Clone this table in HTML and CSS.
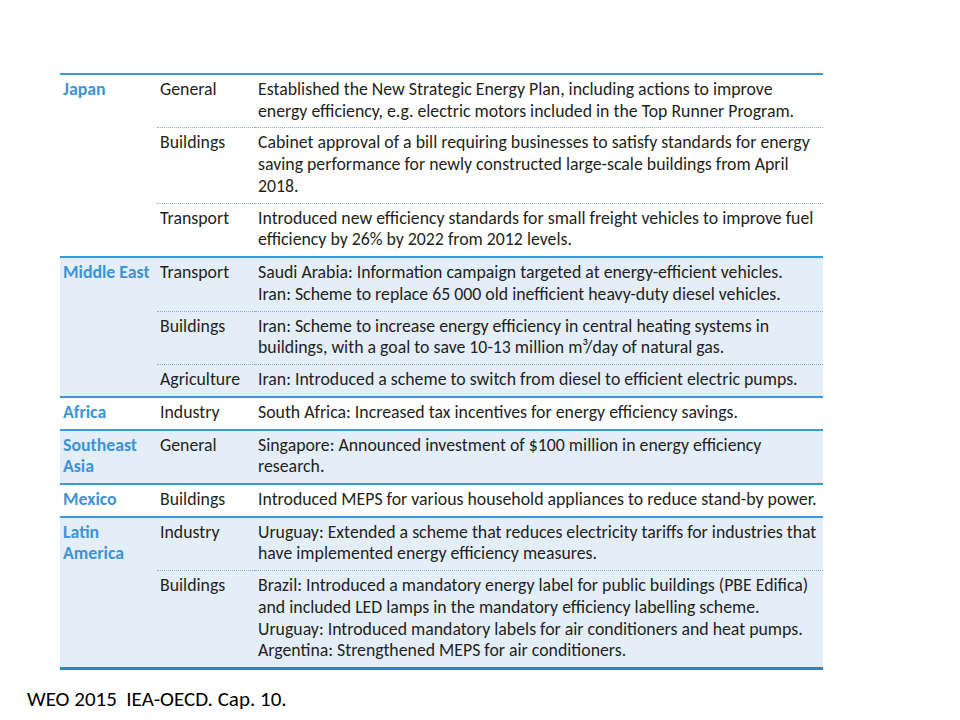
FILE: index.html
```html
<!DOCTYPE html>
<html>
<head>
<meta charset="utf-8">
<link rel="stylesheet" href="styles.css">
</head>
<body>
<div class="slide">
  <table class="policy">
    <colgroup><col class="c-region"><col class="c-sector"><col class="c-desc"></colgroup>
    <tbody class="grp">
      <tr><th rowspan="3">Japan</th><td class="sec">General</td><td>Established the New Strategic Energy Plan, including actions to improve energy efficiency, e.g. electric motors included in the Top Runner Program.</td></tr>
      <tr class="sub"><td class="sec">Buildings</td><td>Cabinet approval of a bill requiring businesses to satisfy standards for energy saving performance for newly constructed large-scale buildings from April 2018.</td></tr>
      <tr class="sub"><td class="sec">Transport</td><td>Introduced new efficiency standards for small freight vehicles to improve fuel efficiency by 26% by 2022 from 2012 levels.</td></tr>
    </tbody>
    <tbody class="grp alt">
      <tr><th rowspan="3">Middle East</th><td class="sec">Transport</td><td>Saudi Arabia: Information campaign targeted at energy-efficient vehicles.<br>Iran: Scheme to replace 65 000 old inefficient heavy-duty diesel vehicles.</td></tr>
      <tr class="sub"><td class="sec">Buildings</td><td>Iran: Scheme to increase energy efficiency in central heating systems in buildings, with a goal to save 10-13 million m³/day of natural gas.</td></tr>
      <tr class="sub"><td class="sec">Agriculture</td><td>Iran: Introduced a scheme to switch from diesel to efficient electric pumps.</td></tr>
    </tbody>
    <tbody class="grp">
      <tr><th>Africa</th><td class="sec">Industry</td><td>South Africa: Increased tax incentives for energy efficiency savings.</td></tr>
    </tbody>
    <tbody class="grp alt">
      <tr><th>Southeast Asia</th><td class="sec">General</td><td>Singapore: Announced investment of $100 million in energy efficiency research.</td></tr>
    </tbody>
    <tbody class="grp">
      <tr><th>Mexico</th><td class="sec">Buildings</td><td>Introduced MEPS for various household appliances to reduce stand-by power.</td></tr>
    </tbody>
    <tbody class="grp alt last">
      <tr><th rowspan="2">Latin America</th><td class="sec">Industry</td><td>Uruguay: Extended a scheme that reduces electricity tariffs for industries that have implemented energy efficiency measures.</td></tr>
      <tr class="sub"><td class="sec">Buildings</td><td>Brazil: Introduced a mandatory energy label for public buildings (PBE Edifica) and included LED lamps in the mandatory efficiency labelling scheme.<br>Uruguay: Introduced mandatory labels for air conditioners and heat pumps.<br>Argentina: Strengthened MEPS for air conditioners.</td></tr>
    </tbody>
  </table>
  <p class="source">WEO 2015&nbsp; IEA-OECD. Cap. 10.</p>
</div>
</body>
</html>
```
FILE: styles.css
```css
html, body {
  margin: 0;
  padding: 0;
  background: #ffffff;
}
.slide {
  width: 960px;
  height: 720px;
  position: relative;
  font-family: Carlito, Calibri, Lato, sans-serif;
  color: #231f20;
}
.policy {
  position: absolute;
  left: 60px;
  top: 73px;
  width: 763px;
  border-collapse: collapse;
  font-size: 17.8px;
  line-height: 21.73px;
  border-top: 2px solid #3a9ad9;
}
.c-region { width: 97px; }
.c-sector { width: 98px; }
.policy th, .policy td {
  vertical-align: top;
  text-align: left;
  padding: 4px 0 5px 3px;
}
.policy th {
  font-weight: bold;
  color: #3d94d4;
  padding-right: 4px;
}
.policy td.sec { padding-left: 3px; }
.grp { border-top: 2px solid #3a9ad9; }
.grp.alt { background: #e3eef9; }
.grp.last { border-bottom: 3px solid #1f86d0; }
.sub td { border-top: 1px dotted #8fa9c8; }
.source {
  position: absolute;
  left: 27px;
  top: 686px;
  margin: 0;
  font-size: 21px;
  line-height: 26px;
  color: #000;
}
```
